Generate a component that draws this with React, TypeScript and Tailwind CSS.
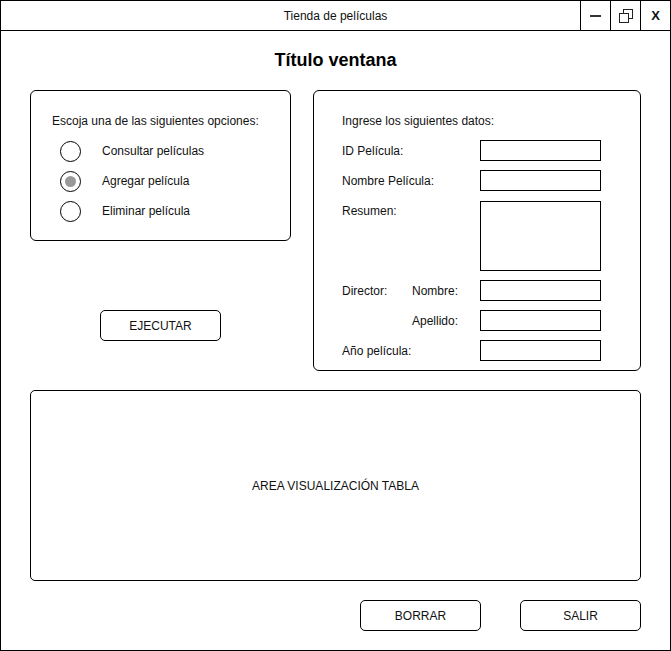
import React from 'react';

const font = "font-['Liberation_Sans',Arial,sans-serif]";

const Radio = ({ label, checked }: { label: string; checked?: boolean }) => (
  <div className="flex items-center h-[30px] pl-[8px]">
    <div className="w-[21px] h-[21px] rounded-full border border-black flex items-center justify-center">
      {checked && <div className="w-[11px] h-[11px] rounded-full bg-[#999999]" />}
    </div>
    <span className="ml-[21px]">{label}</span>
  </div>
);

const Field = ({ className = '' }: { className?: string }) => (
  <div className={`w-[121px] border border-black bg-white ${className}`} />
);

const Button = ({ children, className = '' }: { children: React.ReactNode; className?: string }) => (
  <div
    className={`w-[121px] h-[31px] border border-black rounded-[5px] flex items-center justify-center ${className}`}
  >
    {children}
  </div>
);

export default function App() {
  return (
    <div className={`w-[671px] h-[651px] border border-black bg-white text-[12px] leading-[16px] text-[#111] ${font}`}>
      {/* Title bar */}
      <div className="flex h-[30px] border-b border-black">
        <div className="flex-1 pl-[90px] flex items-center justify-center">Tienda de películas</div>
        <div className="w-[30px] border-l border-black flex items-center justify-center">
          <div className="w-[11px] h-[2px] bg-[#333]" />
        </div>
        <div className="w-[30px] border-l border-black flex items-center justify-center">
          <svg width="16" height="16" viewBox="0 0 16 16" fill="none" stroke="#222" strokeWidth="1">
            <rect x="5.5" y="1.5" width="9" height="9" />
            <rect x="1.5" y="5.5" width="9" height="9" fill="white" />
          </svg>
        </div>
        <div className="w-[30px] border-l border-black flex items-center justify-center font-bold text-[13px]">
          X
        </div>
      </div>

      {/* Window title */}
      <div className="pt-[17px] h-[41px] text-center text-[18px] leading-[24px] font-bold text-black">
        Título ventana
      </div>

      <div className="flex pl-[29px] mt-[18px]">
        {/* Options */}
        <div className="w-[261px]">
          <div className="h-[151px] border border-black rounded-[6px] pt-[22px] pl-[21px]">
            <div>Escoja una de las siguientes opciones:</div>
            <div className="mt-[7px]">
              <Radio label="Consultar películas" />
              <Radio label="Agregar película" checked />
              <Radio label="Eliminar película" />
            </div>
          </div>
          <Button className="mt-[69px] ml-[70px]">EJECUTAR</Button>
        </div>

        {/* Data form */}
        <div className="ml-[22px] w-[328px] h-[281px] border border-black rounded-[6px] pt-[22px] pl-[28px]">
          <div>Ingrese los siguientes datos:</div>
          <div className="flex items-center mt-[11px]">
            <span className="w-[138px]">ID Película:</span>
            <Field className="h-[21px]" />
          </div>
          <div className="flex items-center mt-[9px]">
            <span className="w-[138px]">Nombre Película:</span>
            <Field className="h-[21px]" />
          </div>
          <div className="flex items-start mt-[10px]">
            <span className="w-[138px] pt-[2px]">Resumen:</span>
            <Field className="h-[70px]" />
          </div>
          <div className="flex items-center mt-[9px]">
            <span className="w-[70px]">Director:</span>
            <span className="w-[68px]">Nombre:</span>
            <Field className="h-[21px]" />
          </div>
          <div className="flex items-center mt-[9px]">
            <span className="w-[70px]" />
            <span className="w-[68px]">Apellido:</span>
            <Field className="h-[21px]" />
          </div>
          <div className="flex items-center mt-[9px]">
            <span className="w-[138px]">Año película:</span>
            <Field className="h-[21px]" />
          </div>
        </div>
      </div>

      {/* Table area */}
      <div className="ml-[29px] mt-[19px] w-[611px] h-[191px] border border-black rounded-[5px] flex items-center justify-center">
        AREA VISUALIZACIÓN TABLA
      </div>

      {/* Footer buttons */}
      <div className="flex mt-[19px] ml-[359px] gap-[39px]">
        <Button>BORRAR</Button>
        <Button>SALIR</Button>
      </div>
    </div>
  );
}
